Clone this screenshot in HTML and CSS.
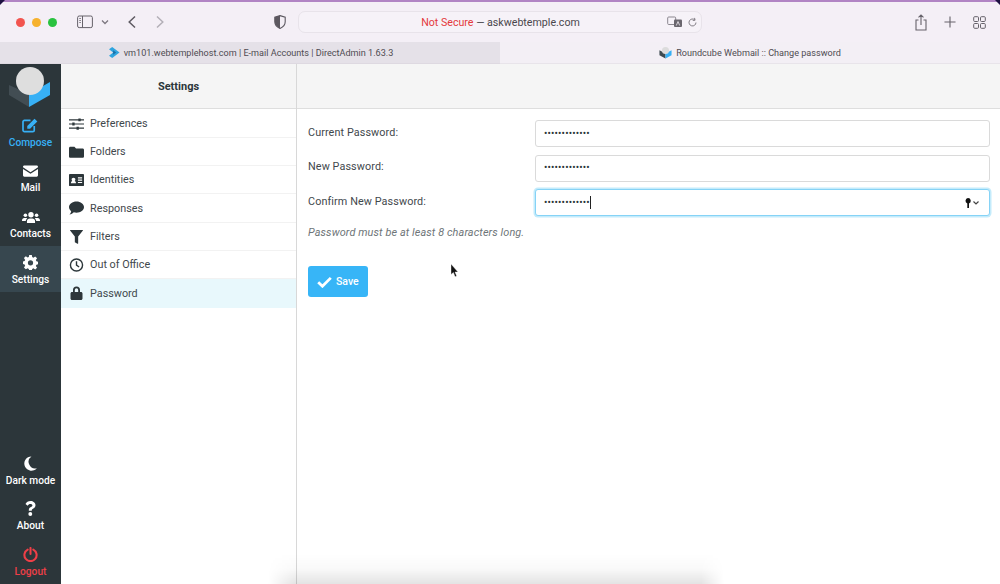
FILE: index.html
```html
<!DOCTYPE html>
<html lang="en">
<head>
<meta charset="utf-8">
<title>Roundcube Webmail :: Change password</title>
<link rel="stylesheet" href="styles.css">
</head>
<body>
<div class="window">
  <header class="toolbar">
    <div class="lights"><i class="light red"></i><i class="light yellow"></i><i class="light green"></i></div>
    <svg class="ic-sidebar" viewBox="0 0 16 14"><rect x=".6" y="1" width="14.8" height="11.6" rx="1.6" fill="none" stroke="#66626a" stroke-width="1"/><path d="M5.5 1v11.6" stroke="#66626a"/><path d="M2.2 3.5h1.8M2.2 5.5h1.8M2.2 7.5h1.8" stroke="#8a868e"/></svg>
    <svg class="ic-caret" viewBox="0 0 8 6"><path d="M1 1.5l3 3 3-3" fill="none" stroke="#7c7880" stroke-width="1.3"/></svg>
    <svg class="ic-back" viewBox="0 0 10 14"><path d="M8 1.5L2.2 7 8 12.5" fill="none" stroke="#5e5a62" stroke-width="1.5"/></svg>
    <svg class="ic-fwd" viewBox="0 0 10 14"><path d="M2 1.5L7.8 7 2 12.5" fill="none" stroke="#b3afb7" stroke-width="1.5"/></svg>
    <svg class="ic-shield" viewBox="0 0 12 14"><path d="M6 .6l5.2 1.6v4.6c0 3.2-2.4 5.4-5.2 6.6C3.200 12.200.8 10 .8 6.800V2.200z" fill="#f3eef5" stroke="#5c5860" stroke-width="1.100"/><path d="M6 .6v13C3.200 12.200.8 10 .8 6.800V2.200z" fill="#5c5860"/></svg>
    <div class="address">
      <span class="url"><span class="insecure">Not Secure</span> — askwebtemple.com</span>
      <svg class="ic-translate" viewBox="0 0 16 12"><rect x=".7" y="1" width="8" height="7.500" rx="1" fill="none" stroke="#8b878f"/><rect x="7" y="3.500" width="8" height="7.500" rx="1" fill="#6a666e"/><path d="M9.300 9.500l1.700-4 1.700 4" fill="none" stroke="#f3eef5" stroke-width=".8"/></svg>
      <svg class="ic-reload" viewBox="0 0 12 12"><path d="M9.800 6a3.800 3.800 0 1 1-1.300-2.900" fill="none" stroke="#77737b"/><path d="M8.200 1l.6 2.500-2.500.3" fill="none" stroke="#77737b"/></svg>
    </div>
    <div class="tools">
      <svg class="ic-share" viewBox="0 0 12 17"><path d="M3.500 6H1v10h10V6H8.500M6 11V1M3.500 3.300L6 1l2.500 2.300" fill="none" stroke="#66626a" stroke-width="1.100"/></svg>
      <svg class="ic-plus" viewBox="0 0 13 13"><path d="M6.500 .5v12M.5 6.500h12" stroke="#66626a" stroke-width="1.200"/></svg>
      <svg class="ic-grid" viewBox="0 0 13 13"><g fill="none" stroke="#66626a"><rect x=".7" y=".7" width="4.800" height="4.800" rx="1"/><rect x="7.500" y=".7" width="4.800" height="4.800" rx="1"/><rect x=".7" y="7.500" width="4.800" height="4.800" rx="1"/><rect x="7.500" y="7.500" width="4.800" height="4.800" rx="1"/></g></svg>
    </div>
  </header>

  <nav class="tabs">
    <div class="tab tab-off">
      <svg class="ic-tab" viewBox="0 0 12 12"><path d="M0 2.500L3.500 0 11.500 6 3.500 12 0 9.500 4.500 6z" fill="#2fa4de"/><path d="M4.500 3.500L7.800 6 4.500 8.500z" fill="#1a6fa8"/></svg>
      <span>vm101.webtemplehost.com | E-mail Accounts | DirectAdmin 1.63.3</span>
    </div>
    <div class="tab tab-on">
      <svg class="ic-tab" viewBox="0 0 14 14"><path d="M7 13.500L.5 10V4.500L7 8z" fill="#3d4a50"/><path d="M7 13.500l6.500-3.500V4.500L7 8z" fill="#37b0f5"/><circle cx="7" cy="4.800" r="3.800" fill="#dcdcdc"/></svg>
      <span>Roundcube Webmail :: Change password</span>
    </div>
  </nav>

  <div class="app">
    <aside class="rail">
      <div class="logo">
        <svg viewBox="0 0 44 46" width="44" height="46"><path d="M1 21l20 9v13L1 31z" fill="#424d53"/><path d="M21 43V30l21-12v13z" fill="#37b0f5"/><circle cx="22" cy="17" r="14" fill="#dedede"/></svg>
      </div>
      <a class="rail-item active-blue">
        <svg viewBox="0 0 18 16" class="rail-ic big"><path d="M13 8.500V13a1.500 1.500 0 0 1-1.500 1.500h-9A1.500 1.500 0 0 1 1 13V4a1.500 1.500 0 0 1 1.500-1.500H9" fill="none" stroke="currentColor" stroke-width="1.800"/><path d="M5.500 8.500v3h3L16.300 3.700 13.300.7z" fill="currentColor"/></svg>
        <span>Compose</span>
      </a>
      <a class="rail-item">
        <svg viewBox="0 0 16 12" class="rail-ic"><path d="M1.400 0h13.200C15.400 0 16 .6 16 1.400v.6L8 7.200 0 2v-.6C0 .6.600 0 1.400 0zM0 3.800l8 5.200 8-5.200v6.800c0 .8-.6 1.400-1.400 1.400H1.400C.6 12 0 11.400 0 10.600z" fill="currentColor"/></svg>
        <span>Mail</span>
      </a>
      <a class="rail-item">
        <svg viewBox="0 0 20 14" class="rail-ic wide"><g fill="currentColor"><circle cx="10" cy="4" r="3"/><circle cx="3.800" cy="4.500" r="2"/><circle cx="16.200" cy="4.500" r="2"/><path d="M5.500 13v-2c0-2 1.500-3 3-3h3c1.500 0 3 1 3 3v2z"/><path d="M0 10.500C0 8.500 1 7.500 2.500 7.500h2c.5 0 1 .2 1.300.5-1 .7-1.500 1.700-1.600 3H0zM20 10.500c0-2-1-3-2.500-3h-2c-.5 0-1 .2-1.300.5 1 .7 1.500 1.700 1.600 3H20z"/></g></svg>
        <span>Contacts</span>
      </a>
      <a class="rail-item current">
        <svg viewBox="0 0 16 16" class="rail-ic tall"><path fill="currentColor" fill-rule="evenodd" d="M6.600 0h2.800l.4 2.200 1.300.6 1.900-1.300 2 2-1.300 1.900.6 1.300 1.700.4v2.800l-1.700.4-.6 1.300 1.300 1.900-2 2-1.900-1.300-1.300.6-.4 2.200H6.600l-.4-2.200-1.300-.6L3 15.300l-2-2 1.300-1.900-.6-1.300L0 9.700V6.900l1.700-.4.6-1.300L1 3.300l2-2 1.900 1.300 1.300-.6zM8 5.500a2.800 2.800 0 1 0 0 5.600 2.800 2.800 0 0 0 0-5.600z"/></svg>
        <span>Settings</span>
      </a>
      <div class="rail-spacer"></div>
      <a class="rail-item">
        <svg viewBox="0 0 16 16" class="rail-ic tall"><path d="M9 .5a7.600 7.600 0 1 0 5.800 12.500A7 7 0 0 1 9 .5z" fill="currentColor"/></svg>
        <span>Dark mode</span>
      </a>
      <a class="rail-item">
        <svg viewBox="0 0 10 15" class="rail-ic tall"><path d="M5.200 0C2.500 0 1 1.200 0 3l2.200 1.700c.7-1 1.300-1.600 2.800-1.600 1 0 1.900.6 1.900 1.400 0 .7-.5 1-1.500 1.600C4.300 6.700 3.300 7.500 3.300 9v.8h3v-.6c0-.8.500-1.100 1.500-1.700C9 6.800 10 6 10 4.300 10 1.700 7.500 0 5.200 0zM4.800 11a1.900 1.900 0 1 0 0 3.900 1.900 1.900 0 0 0 0-3.900z" fill="currentColor"/></svg>
        <span>About</span>
      </a>
      <a class="rail-item logout">
        <svg viewBox="0 0 16 16" class="rail-ic tall"><path d="M5 2.800a6.500 6.500 0 1 0 6 0" fill="none" stroke="currentColor" stroke-width="2.200" stroke-linecap="round"/><path d="M8 1v6.500" stroke="currentColor" stroke-width="2.200" stroke-linecap="round"/></svg>
        <span>Logout</span>
      </a>
    </aside>

    <section class="list">
      <h2 class="list-head">Settings</h2>
      <ul class="rows">
        <li class="row"><svg class="row-ic" viewBox="0 0 16 14"><path d="M0 2.500h16M0 7h16M0 11.500h16" stroke="#2c363a" stroke-width="1.300"/><path d="M10 1h2.500v3H10zM3.500 5.500H6v3H3.500zM8 10h2.500v3H8z" fill="#2c363a"/></svg>Preferences</li>
        <li class="row"><svg class="row-ic" viewBox="0 0 16 14"><path d="M1.500 1.500h4.300L7.500 3.200h7c.8 0 1.500.7 1.500 1.500v7c0 .8-.7 1.500-1.500 1.500h-13C.7 13.200 0 12.500 0 11.700V3c0-.8.700-1.500 1.500-1.500z" fill="#2c363a"/></svg>Folders</li>
        <li class="row"><svg class="row-ic" viewBox="0 0 16 13"><path fill="#2c363a" fill-rule="evenodd" d="M1 0h14c.6 0 1 .4 1 1v11c0 .6-.4 1-1 1H1c-.6 0-1-.4-1-1V1c0-.6.400-1 1-1zm8.500 3.500V5H14V3.500zm0 2.500v1.300H14V6zm0 2.500v1.300H14V8.500zM2 10h5.500C7.500 8.500 6.800 7.800 6 7.500c.6-.5.800-1 .8-1.600C6.800 4.800 6 4 4.800 4S2.800 4.800 2.800 5.900c0 .6.200 1.100.7 1.600C2.700 7.800 2 8.500 2 10z"/></svg>Identities</li>
        <li class="row"><svg class="row-ic" viewBox="0 0 16 14"><path d="M8 0c4.400 0 8 2.700 8 6s-3.600 6-8 6c-1 0-2-.1-2.900-.4C4 12.700 2.400 13.800.5 14c1-1 1.700-2.300 1.800-3.500C.9 9.400 0 7.800 0 6c0-3.300 3.600-6 8-6z" fill="#2c363a"/></svg>Responses</li>
        <li class="row"><svg class="row-ic narrow" viewBox="0 0 14 15"><path d="M.3 0h13.400c.3 0 .4.300.2.500L8.800 7v7.300c0 .5-.4.700-.8.500l-2.300-1.300c-.3-.1-.5-.4-.5-.7V7L.1.500C-.1.300 0 0 .3 0z" fill="#2c363a"/></svg>Filters</li>
        <li class="row"><svg class="row-ic" viewBox="0 0 15 15"><circle cx="7.500" cy="7.500" r="6.500" fill="none" stroke="#2c363a" stroke-width="1.500"/><path d="M7.500 3.500v4.200l2.800 2" fill="none" stroke="#2c363a" stroke-width="1.500"/></svg>Out of Office</li>
        <li class="row selected"><svg class="row-ic narrow" viewBox="0 0 12 14"><path fill="#2c363a" d="M2.500 6V4a3.500 3.500 0 0 1 7 0v2h1c.8 0 1.500.7 1.500 1.500v5c0 .8-.7 1.500-1.500 1.500h-9C.7 14 0 13.300 0 12.500v-5C0 6.700.7 6 1.500 6zM4.300 6h3.400V4a1.700 1.700 0 0 0-3.400 0z"/></svg>Password</li>
      </ul>
    </section>

    <main class="content">
      <div class="content-head"></div>
      <form class="form">
        <div class="field"><label>Current Password:</label><div class="input"><span class="dots">•••••••••••••</span></div></div>
        <div class="field"><label>New Password:</label><div class="input"><span class="dots">•••••••••••••</span></div></div>
        <div class="field"><label>Confirm New Password:</label>
          <div class="input focused"><span class="dots">•••••••••••••</span><i class="caret"></i>
            <svg class="ic-key" viewBox="0 0 15 10"><path d="M3 0a2.800 2.800 0 0 1 1 5.400V10H2.300V5.400A2.800 2.800 0 0 1 3 0z" fill="#111"/><path d="M8.500 3.500l2.500 2.500 2.500-2.500" fill="none" stroke="#444" stroke-width="1.200"/></svg>
          </div>
        </div>
        <p class="hint">Password must be at least 8 characters long.</p>
        <button class="save" type="button"><svg viewBox="0 0 16 12" width="15" height="12"><path d="M1.300 6.200l4.500 4.300L14.700 1.600" fill="none" stroke="#fff" stroke-width="3"/></svg>Save</button>
      </form>
    </main>
  </div>

  <svg class="pointer" viewBox="0 0 9 14" width="9" height="14"><path d="M1 0v10.500l2.400-2 1.700 4.200 1.600-.7-1.700-4h3z" fill="#111" stroke="#fff" stroke-width=".4"/></svg>
  <div class="dock-shadow"></div>
  <i class="corner corner-tl"></i>
  <i class="corner corner-tr"></i>
</div>
</body>
</html>
```
FILE: styles.css
```css
* { box-sizing: border-box; }
html, body { margin: 0; height: 100%; }
body { background: #fff; font-family: Roboto, "Liberation Sans", sans-serif; color: #2c363a; overflow: hidden; }
.window { position: relative; width: 1000px; height: 584px; display: flex; flex-direction: column; overflow: hidden; }

.toolbar { flex: 0 0 42px; display: flex; align-items: center; background: #f4eff6; border-top: 2px solid #b184c4; padding-left: 16px; }
.lights { display: flex; gap: 7px; }
.light { width: 9px; height: 9px; border-radius: 50%; display: block; }
.red { background: #f2544f; }
.yellow { background: #f6b12e; }
.green { background: #29c23f; }
.toolbar svg { display: block; flex: none; }
.ic-sidebar { width: 16px; height: 14px; margin-left: 20px; }
.ic-caret { width: 8px; height: 6px; margin-left: 8px; }
.ic-back { width: 10px; height: 14px; margin-left: 18px; }
.ic-fwd { width: 10px; height: 14px; margin-left: 18px; }
.ic-shield { width: 12px; height: 14px; margin-left: 109px; }
.address { width: 404px; height: 22px; margin-left: 12px; display: flex; align-items: center; background: #f6f2f8; border: 1px solid #e8e3ea; border-radius: 7px; padding-right: 3px; font-size: 10.650px; color: #4a474d; }
.url { flex: 1; text-align: center; padding-left: 35px; }
.insecure { color: #e4393c; }
.ic-translate { width: 16px; height: 12px; }
.ic-reload { width: 11px; height: 11px; margin-left: 4px; }
.tools { margin-left: auto; display: flex; align-items: center; padding-right: 14px; gap: 17px; }
.ic-share { width: 12px; height: 17px; }
.ic-plus { width: 12px; height: 12px; }
.ic-grid { width: 13px; height: 13px; }

.tabs { flex: 0 0 22px; display: flex; font-size: 9.100px; color: #4f4c52; }
.tab { flex: 0 0 50%; display: flex; align-items: center; justify-content: center; gap: 4px; }
.tab-off { background: #e5e1e8; border-bottom: 1px solid #ded9e1; padding-left: 2px; }
.tab-on { background: #f3eff5; border-bottom: 1px solid #e8e4ea; }
.ic-tab { width: 11px; height: 11px; flex: none; }
.tab-on .ic-tab { width: 13px; height: 13px; }

.app { flex: 1; display: flex; min-height: 0; }
.rail { flex: 0 0 61px; background: #2c363a; display: flex; flex-direction: column; color: #fff; }
.logo { height: 45px; display: flex; justify-content: center; align-items: flex-start; padding-right: 1px; }
.rail-item { height: 45.700px; display: flex; flex-direction: column; align-items: center; justify-content: flex-end; padding-bottom: 6px; gap: 4px; font-size: 10.200px; font-weight: 500; line-height: 12px; color: #fff; }
.rail-spacer { flex: 1; }
.rail-ic { width: 15px; height: 14px; display: block; }
.rail-ic.big { width: 17px; height: 15px; }
.rail-ic.wide { width: 18px; height: 13px; }
.rail-ic.tall { height: 15px; }
.active-blue { color: #37b0f5; }
.current { background: #37474f; }
.logout { color: #ee3f47; }
.logout .rail-ic { color: #ee3f47; }

.list { flex: 0 0 236px; border-right: 1px solid #d8d8d8; background: #fff; display: flex; flex-direction: column; }
.list-head { margin: 0; height: 45px; display: flex; align-items: center; justify-content: center; background: #f5f5f5; border-bottom: 1px solid #dedede; font-size: 11px; font-weight: 700; }
.rows { list-style: none; margin: 0; padding: .5px 0 0; }
.row { height: 28.300px; display: flex; align-items: center; padding-left: 29px; position: relative; font-size: 10.800px; color: #3f484c; border-bottom: 1px solid #f2f2f2; }
.row-ic { position: absolute; left: 8px; top: 7px; width: 15px; height: 14px; }
.row-ic.narrow { left: 9px; width: 13px; }
.selected { background: #e8f8fc; border-bottom: 0; }

.content { flex: 1; display: flex; flex-direction: column; min-width: 0; }
.content-head { height: 45px; background: #f5f5f5; border-bottom: 1px solid #dedede; }
.form { padding: 11px 10px 0 11px; }
.field { display: flex; align-items: center; height: 27px; margin-bottom: 7.500px; }
.field label { flex: 0 0 227px; font-size: 10.800px; color: #3f484c; letter-spacing: .1px; padding-bottom: 3px; }
.input { flex: 1; height: 27px; display: flex; align-items: center; border: 1px solid #dadada; border-radius: 3px; padding-left: 8px; font-size: 10px; color: #2c363a; background: #fff; }
.dots { line-height: 1; letter-spacing: .15px; }
.focused { border-color: #86d3f6; box-shadow: 0 0 0 1.500px #c4ebfb; }
.caret { display: block; width: 1px; height: 13px; background: #222; }
.ic-key { width: 15px; height: 10px; margin-left: auto; margin-right: 9px; }
.hint { margin: 10px 0 0; font-size: 10.900px; font-style: italic; color: #6e7578; letter-spacing: .1px; height: 13px; line-height: 13px; }
.save { margin-top: 27px; width: 60px; height: 31px; display: flex; align-items: center; gap: 4px; padding: 0 0 0 9px; border: 0; border-radius: 3px; background: #37b5f7; color: #fff; font: 500 10.500px Roboto, sans-serif; }

.pointer { position: absolute; left: 450px; top: 264px; }
.dock-shadow { position: absolute; left: 268px; bottom: 0; width: 456px; height: 30px; background: linear-gradient(to bottom, rgba(0,0,0,0), rgba(0,0,0,.025) 50%, rgba(0,0,0,.11)); -webkit-mask-image: linear-gradient(to right, transparent, #000 6%, #000 95%, transparent); mask-image: linear-gradient(to right, transparent, #000 6%, #000 95%, transparent); }
.corner { position: absolute; top: 0; width: 5px; height: 5px; background: #1d1140; }
.corner-tl { left: 0; clip-path: polygon(0 0, 100% 0, 0 100%); }
.corner-tr { right: 0; clip-path: polygon(0 0, 100% 0, 100% 100%); }
```
